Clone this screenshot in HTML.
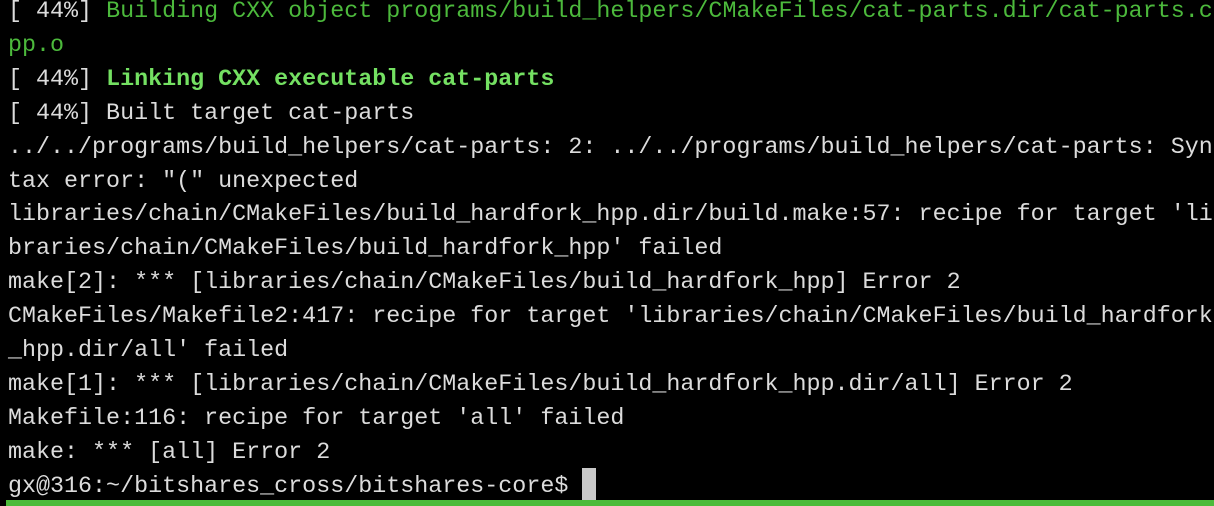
<!DOCTYPE html>
<html><head><style>
html,body{margin:0;padding:0;background:#000;width:1214px;height:506px;overflow:hidden}
pre{position:absolute;left:8px;top:-4px;margin:0;font-family:"Liberation Mono",monospace;font-size:23.35px;line-height:33.9px;color:#dcdcdc;white-space:pre}
.g{color:#4cb93c}.b{color:#74e062;font-weight:bold}
#cur{position:absolute;left:582px;top:468px;width:14px;height:32px;background:#c8c8c8}
#bar{position:absolute;left:6px;top:500px;width:1208px;height:6px;background:#4cbb3a}
</style></head><body>
<pre>[ 44%] <span class="g">Building CXX object programs/build_helpers/CMakeFiles/cat-parts.dir/cat-parts.c</span>
<span class="g">pp.o</span>
[ 44%] <span class="b">Linking CXX executable cat-parts</span>
[ 44%] Built target cat-parts
../../programs/build_helpers/cat-parts: 2: ../../programs/build_helpers/cat-parts: Syn
tax error: "(" unexpected
libraries/chain/CMakeFiles/build_hardfork_hpp.dir/build.make:57: recipe for target 'li
braries/chain/CMakeFiles/build_hardfork_hpp' failed
make[2]: *** [libraries/chain/CMakeFiles/build_hardfork_hpp] Error 2
CMakeFiles/Makefile2:417: recipe for target 'libraries/chain/CMakeFiles/build_hardfork
_hpp.dir/all' failed
make[1]: *** [libraries/chain/CMakeFiles/build_hardfork_hpp.dir/all] Error 2
Makefile:116: recipe for target 'all' failed
make: *** [all] Error 2
gx@316:~/bitshares_cross/bitshares-core$ </pre>
<div id="cur"></div><div id="bar"></div>
</body></html>
